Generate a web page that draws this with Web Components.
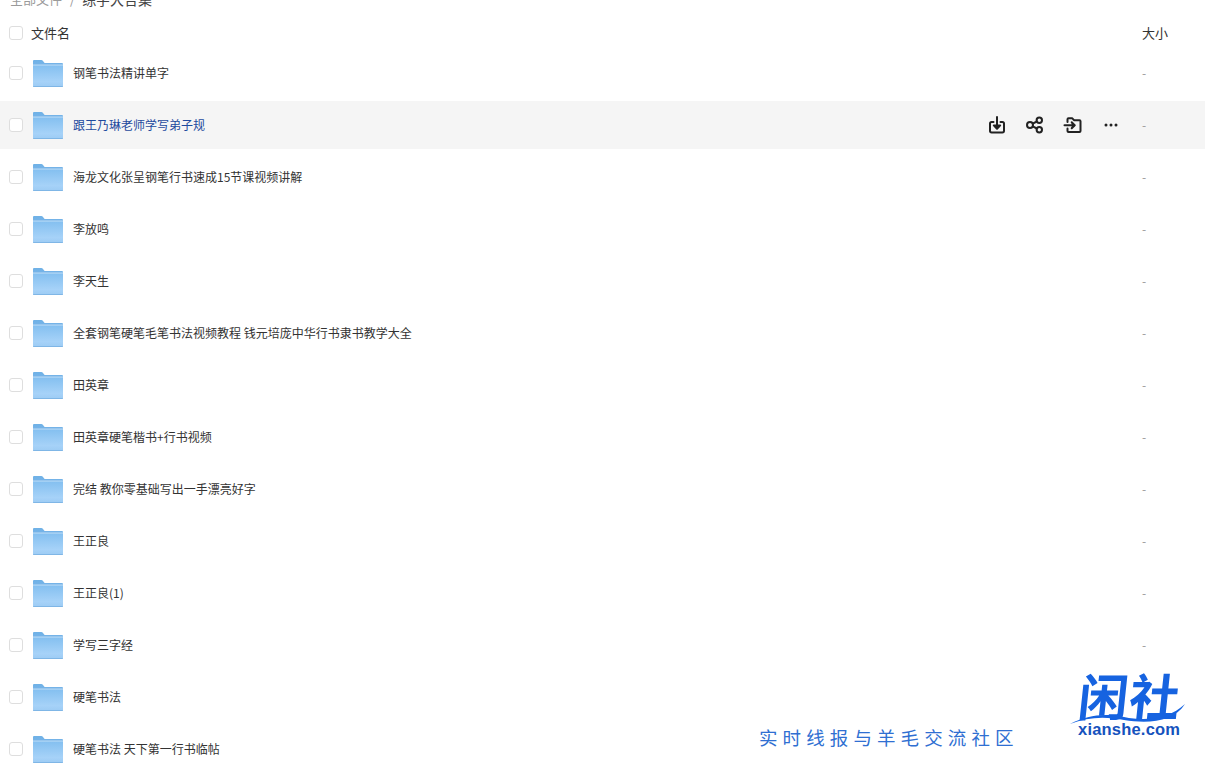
<!DOCTYPE html>
<html lang="zh">
<head>
<meta charset="utf-8">
<title>文件列表</title>
<style>
  html, body { margin: 0; height: 100%; overflow: hidden; background: #fff; }
  body { font-family: "Noto Sans CJK SC", "Noto Sans", sans-serif; color: #333; }
</style>
</head>
<body>
<file-page>
  <bread-crumb root="全部文件" current="练字大合集"></bread-crumb>
  <file-header></file-header>
  <file-row name="钢笔书法精讲单字"></file-row>
  <file-row name="跟王乃琳老师学写弟子规" active></file-row>
  <file-row name="海龙文化张呈钢笔行书速成15节课视频讲解"></file-row>
  <file-row name="李放鸣"></file-row>
  <file-row name="李天生"></file-row>
  <file-row name="全套钢笔硬笔毛笔书法视频教程 钱元培庞中华行书隶书教学大全"></file-row>
  <file-row name="田英章"></file-row>
  <file-row name="田英章硬笔楷书+行书视频"></file-row>
  <file-row name="完结 教你零基础写出一手漂亮好字"></file-row>
  <file-row name="王正良"></file-row>
  <file-row name="王正良(1)"></file-row>
  <file-row name="学写三字经"></file-row>
  <file-row name="硬笔书法" no-size></file-row>
  <file-row name="硬笔书法 天下第一行书临帖" no-size></file-row>
  <water-mark slot="overlay"></water-mark>
</file-page>

<script>
const CHECK_CSS = `
  .check { flex: none; box-sizing: border-box; width: 14px; height: 14px; margin-left: 9px; border: 1px solid #dedede; border-radius: 3px; background: #fff; }
`;

class FilePage extends HTMLElement {
  constructor() {
    super();
    this.attachShadow({ mode: "open" });
    this.shadowRoot.innerHTML = `
      <style>
        :host { display: block; position: relative; height: 767px; overflow: hidden; }
        .list { display: flex; flex-direction: column; margin-top: -11px; }
      </style>
      <div class="list"><slot></slot></div>
      <slot name="overlay"></slot>
    `;
  }
}

class BreadCrumb extends HTMLElement {
  constructor() {
    super();
    this.attachShadow({ mode: "open" });
  }
  connectedCallback() {
    this.shadowRoot.innerHTML = `
      <style>
        :host { display: flex; align-items: center; height: 20px; padding-left: 10px; font-size: 13px; line-height: 20px; }
        .root { color: #9a9a9a; }
        .sep { color: #999; margin: 0 7px 0 8px; }
        .cur { color: #444; font-size: 14px; }
      </style>
      <span class="root">${this.getAttribute("root")}</span><span class="sep">/</span><span class="cur">${this.getAttribute("current")}</span>
    `;
  }
}

class FileHeader extends HTMLElement {
  constructor() {
    super();
    this.attachShadow({ mode: "open" });
    this.shadowRoot.innerHTML = `
      <style>
        :host { display: flex; align-items: center; box-sizing: border-box; height: 40px; padding-top: 8px; font-size: 13px; color: #333; }
        ${CHECK_CSS}
        .name { margin-left: 8px; flex: 1; padding-bottom: 2px; }
        .size { width: 63px; padding-bottom: 2px; }
      </style>
      <span class="check"></span><span class="name">文件名</span><span class="size">大小</span>
    `;
  }
}

const FOLDER_ICON = `
  <svg width="32" height="30" viewBox="0 0 32 30" aria-hidden="true">
    <defs>
      <linearGradient id="fb" x1="0" y1="0" x2="0" y2="1">
        <stop offset="0" stop-color="#6fb1e6"/><stop offset="1" stop-color="#7ab6ea"/>
      </linearGradient>
      <linearGradient id="ff" x1="0" y1="0" x2="0" y2="1">
        <stop offset="0" stop-color="#83bff0"/><stop offset=".75" stop-color="#a6d2f8"/><stop offset="1" stop-color="#9ccbf4"/>
      </linearGradient>
    </defs>
    <path d="M1 3.200C1 2.500 1.500 2 2.200 2h7.200c.5 0 .9.2 1.200.6L12.600 5h17.200c.7 0 1.200.5 1.200 1.200V10H1z" fill="url(#fb)"/>
    <path d="M1 7.400l.1-.4h29.700c.1 0 .2.1.2.2V27.800c0 .7-.5 1.200-1.200 1.200H2.200C1.500 29 1 28.500 1 27.800z" fill="url(#ff)"/>
    <path d="M1 7h30" stroke="#dcedfb" stroke-width=".7"/>
    <path d="M1 28h30c0 .6-.4 1-1 1H2c-.6 0-1-.4-1-1z" fill="#7fb6e6"/>
  </svg>
`;

const ACTION_ICONS = `
  <svg viewBox="0 0 20 20" aria-hidden="true"><path d="M6.500 7H4.600A1.600 1.600 0 0 0 3 8.600v7.200A1.600 1.600 0 0 0 4.600 17.400h10.800a1.600 1.600 0 0 0 1.600-1.600V8.600A1.600 1.600 0 0 0 15.400 7h-1.900"/><path d="M10 2v10"/><path d="M6.800 10.400h6.400L10 13.800z" fill="#222"/></svg>
  <svg viewBox="0 0 20 20" aria-hidden="true"><circle cx="5" cy="10" r="3"/><circle cx="14.300" cy="5.300" r="2.700"/><circle cx="14.300" cy="14.700" r="2.700"/><path d="M7.700 8.600l4.200-2.100M7.700 11.400l4.200 2.100"/></svg>
  <svg viewBox="0 0 20 20" aria-hidden="true"><path d="M4.500 7V4.300c0-.6.400-1 1-1h3.800l1.700 1.900h5.500c.6 0 1 .4 1 1v9.800c0 .6-.4 1-1 1H5.500c-.6 0-1-.4-1-1V13.500"/><path d="M1.500 10.200h9.800"/><path d="M8.700 7.200l3 3-3 3" fill="#222"/></svg>
  <svg viewBox="0 0 20 20" aria-hidden="true" class="more"><circle cx="5" cy="10" r="1.500"/><circle cx="10" cy="10" r="1.500"/><circle cx="15" cy="10" r="1.500"/></svg>
`;

class FileRow extends HTMLElement {
  constructor() {
    super();
    this.attachShadow({ mode: "open" });
  }
  connectedCallback() {
    const active = this.hasAttribute("active");
    const size = this.hasAttribute("no-size") ? "" : "-";
    this.shadowRoot.innerHTML = `
      <style>
        :host { display: flex; align-items: center; height: 48px; margin-bottom: 4px; font-size: 12px; color: #333; }
        :host([active]) { background: #f5f5f5; }
        ${CHECK_CSS}
        .folder { flex: none; width: 32px; height: 30px; margin-left: 8.500px; display: block; }
        .name { margin-left: 9.500px; flex: 1; white-space: nowrap; padding-bottom: 2px; }
        :host([active]) .name { color: #1e4a9e; }
        .actions { display: flex; gap: 18px; margin-right: 21px; }
        .actions svg { width: 20px; height: 20px; fill: none; stroke: #222; stroke-width: 2; stroke-linecap: round; stroke-linejoin: round; }
        .actions svg.more { fill: #222; stroke: none; }
        .size { width: 63px; color: #999; padding-bottom: 2px; }
      </style>
      <span class="check"></span>
      <span class="folder">${FOLDER_ICON}</span>
      <span class="name">${this.getAttribute("name")}</span>
      ${active ? `<span class="actions">${ACTION_ICONS}</span>` : ""}
      <span class="size">${size}</span>
    `;
  }
}

class WaterMark extends HTMLElement {
  constructor() {
    super();
    this.attachShadow({ mode: "open" });
    this.shadowRoot.innerHTML = `
      <style>
        :host { display: block; position: absolute; left: 0; top: 0; width: 1205px; height: 767px; pointer-events: none; }
        .slogan { position: absolute; left: 759px; top: 723px; font-size: 18.500px; line-height: 28px; letter-spacing: 5.100px; color: #2f6fd2; white-space: nowrap; }
        .logo { position: absolute; left: 1066px; top: 668px; width: 124px; height: 72px; }
        .cn { position: absolute; left: 13px; top: 4px; font-size: 50px; line-height: 44px; font-weight: 700; letter-spacing: 1px; color: #1663e0; white-space: nowrap; transform: skewX(-6deg); }
        .wave { position: absolute; left: 0; top: 32px; }
        .en { position: absolute; left: 12px; top: 52px; font: 700 16.500px/18px "Liberation Sans", sans-serif; letter-spacing: .2px; color: #1552bd; white-space: nowrap; }
      </style>
      <div class="slogan">实时线报与羊毛交流社区</div>
      <div class="logo">
        <div class="cn">闲社</div>
        <svg class="wave" width="124" height="24" viewBox="0 0 124 24" aria-hidden="true">
          <path d="M4 24C22 15 38 13 58 17c24 5 46 1 61-13-11 18-37 20-61 16C38 16 22 17 4 24z" fill="#1663e0"/>
        </svg>
        <div class="en">xianshe.com</div>
      </div>
    `;
  }
}

customElements.define("file-page", FilePage);
customElements.define("bread-crumb", BreadCrumb);
customElements.define("file-header", FileHeader);
customElements.define("file-row", FileRow);
customElements.define("water-mark", WaterMark);
</script>
</body>
</html>
